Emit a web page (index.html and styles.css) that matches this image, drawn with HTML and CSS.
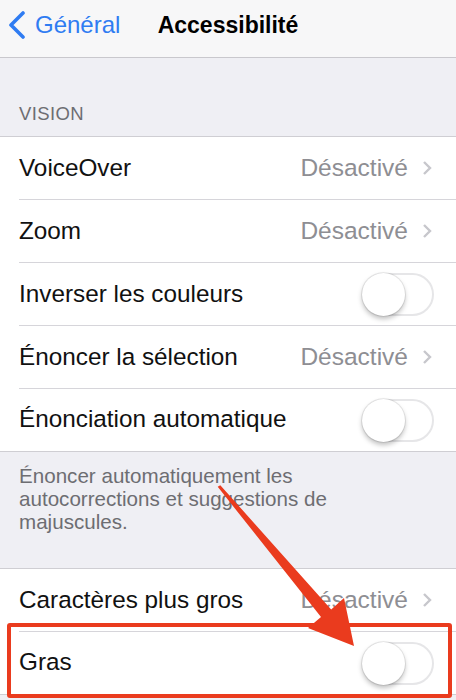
FILE: index.html
```html
<!DOCTYPE html>
<html lang="fr">
<head>
<meta charset="utf-8">
<title>Accessibilité</title>
<link rel="stylesheet" href="styles.css">
</head>
<body>
<div class="page">
  <header class="nav">
    <div class="back">
      <svg class="back-chev" width="18" height="28" viewBox="0 0 18 28"><polyline points="15,2 3,14 15,26" fill="none" stroke="#2f7cf2" stroke-width="3.6" stroke-linecap="round" stroke-linejoin="round"/></svg>
      <span>Général</span>
    </div>
    <h1 class="title">Accessibilité</h1>
  </header>

  <div class="section-head">VISION</div>
  <div class="group">
    <div class="row"><span class="label">VoiceOver</span><span class="value">Désactivé</span><svg class="chev" width="10" height="16" viewBox="0 0 10 16"><polyline points="2,2 8,8 2,14" fill="none" stroke="#c7c7cc" stroke-width="2.4"/></svg></div>
    <div class="row"><span class="label">Zoom</span><span class="value">Désactivé</span><svg class="chev" width="10" height="16" viewBox="0 0 10 16"><polyline points="2,2 8,8 2,14" fill="none" stroke="#c7c7cc" stroke-width="2.4"/></svg></div>
    <div class="row"><span class="label">Inverser les couleurs</span><span class="switch"><span class="knob"></span></span></div>
    <div class="row"><span class="label">Énoncer la sélection</span><span class="value">Désactivé</span><svg class="chev" width="10" height="16" viewBox="0 0 10 16"><polyline points="2,2 8,8 2,14" fill="none" stroke="#c7c7cc" stroke-width="2.4"/></svg></div>
    <div class="row last"><span class="label">Énonciation automatique</span><span class="switch"><span class="knob"></span></span></div>
  </div>
  <p class="footer">Énoncer automatiquement les autocorrections et suggestions de majuscules.</p>

  <div class="group">
    <div class="row"><span class="label">Caractères plus gros</span><span class="value">Désactivé</span><svg class="chev" width="10" height="16" viewBox="0 0 10 16"><polyline points="2,2 8,8 2,14" fill="none" stroke="#c7c7cc" stroke-width="2.4"/></svg></div>
    <div class="row last highlight"><span class="label">Gras</span><span class="switch"><span class="knob"></span></span><span class="redbox"></span></div>
  </div>

  <svg class="arrow" width="456" height="700" viewBox="0 0 456 700">
    <polygon points="220.3,485.2 331.2,609.5 344,598 354,646 308,628 321,617 217.7,486.8" fill="#ea3b1e"/>
  </svg>
</div>
</body>
</html>
```

FILE: styles.css
```css
* { box-sizing: border-box; }
html, body {
  margin: 0;
  padding: 0;
  background: #efeff4;
}
body {
  font-family: "Liberation Sans", Arial, sans-serif;
  color: #000;
}
.page {
  position: relative;
  width: 456px;
  height: 700px;
  overflow: hidden;
}
.nav {
  height: 58px;
  background: #f7f7f8;
  border-bottom: 1px solid #c9c8cd;
  display: flex;
  align-items: center;
  position: relative;
}
.back {
  display: flex;
  align-items: center;
  gap: 9px;
  padding-left: 8px;
  color: #2f7cf2;
  font-size: 24px;
  margin-top: -7px;
}
.back-chev { display: block; }
.title {
  position: absolute;
  left: 0;
  right: 0;
  top: 12px;
  margin: 0;
  text-align: center;
  font-size: 23px;
  font-weight: bold;
}
.section-head {
  height: 78px;
  padding: 45px 0 0 19px;
  font-size: 18.5px;
  color: #6d6d72;
  letter-spacing: 0.4px;
}
.group {
  background: #fff;
  border-top: 1px solid #cfced3;
  border-bottom: 1px solid #cfced3;
}
.row {
  position: relative;
  height: 63px;
  display: flex;
  align-items: center;
  padding-left: 19px;
  padding-right: 22px;
  padding-bottom: 2px;
}
.row::after {
  content: "";
  position: absolute;
  left: 19px;
  right: 0;
  bottom: 0;
  border-bottom: 1px solid #d6d5da;
}
.row.last { height: 62px; }
.row.last::after { display: none; }
.label {
  flex: 1;
  font-size: 24.3px;
  color: #111;
}
.value {
  font-size: 24.5px;
  color: #8e8e93;
  margin-right: 14px;
}
.chev { display: block; margin-right: 2px; }
.switch {
  position: relative;
  width: 72px;
  height: 43px;
  border-radius: 22px;
  border: 2px solid #e6e6e8;
  background: #fff;
  margin-top: 2px;
}
.knob {
  position: absolute;
  left: -2px;
  top: -2px;
  width: 43px;
  height: 43px;
  border-radius: 50%;
  background: #fff;
  box-shadow: 0 3px 5px rgba(0,0,0,0.25), 0 0 0 1px rgba(0,0,0,0.08);
}
.footer {
  margin: 0;
  height: 116px;
  width: 365px;
  padding: 12px 0 0 19px;
  font-size: 20.6px;
  line-height: 23px;
  color: #6d6d72;
}
.redbox {
  position: absolute;
  left: 7px;
  right: 4px;
  top: -9px;
  bottom: -4px;
  border: 4px solid #ea3b1e;
  border-radius: 3px;
}
.arrow {
  position: absolute;
  left: 0;
  top: 0;
  pointer-events: none;
}
```
